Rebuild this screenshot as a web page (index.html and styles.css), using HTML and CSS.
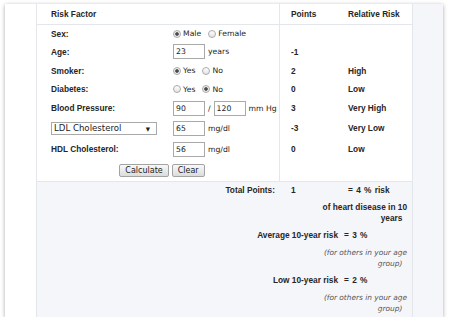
FILE: index.html
```html
<!DOCTYPE html>
<html lang="en">
<head>
  <meta charset="UTF-8">
  <title>Heart Risk Calculator</title>
  <link rel="stylesheet" href="styles.css">
</head>
<body>
  <div class="card">
    <div class="panel">
      <div class="sheet">
        <!-- form part -->
        <div class="form">
          <div class="row head">
            <div class="lbl span2 b">Risk Factor</div>
            <div class="pts b">Points</div>
            <div class="risk b">Relative Risk</div>
          </div>
          <div class="row r-sex">
            <div class="lbl b">Sex:</div>
            <div class="ctl">
              <label class="opt"><input type="radio" name="sex" checked>Male</label>
              <label class="opt"><input type="radio" name="sex">Female</label>
            </div>
            <div class="pts b"></div>
            <div class="risk b"></div>
          </div>
          <div class="row r-age">
            <div class="lbl b">Age:</div>
            <div class="ctl"><input class="num" type="text" value="23"><span class="unit">years</span></div>
            <div class="pts b">-1</div>
            <div class="risk b"></div>
          </div>
          <div class="row r-smoke">
            <div class="lbl b">Smoker:</div>
            <div class="ctl">
              <label class="opt"><input type="radio" name="smoker" checked>Yes</label>
              <label class="opt"><input type="radio" name="smoker">No</label>
            </div>
            <div class="pts b">2</div>
            <div class="risk b">High</div>
          </div>
          <div class="row r-diab">
            <div class="lbl b">Diabetes:</div>
            <div class="ctl">
              <label class="opt"><input type="radio" name="diabetes">Yes</label>
              <label class="opt"><input type="radio" name="diabetes" checked>No</label>
            </div>
            <div class="pts b">0</div>
            <div class="risk b">Low</div>
          </div>
          <div class="row r-bp">
            <div class="lbl b">Blood Pressure:</div>
            <div class="ctl">
              <input class="num" type="text" value="90"><span class="slash">/</span><input class="num" type="text" value="120"><span class="unit">mm Hg</span>
            </div>
            <div class="pts b">3</div>
            <div class="risk b">Very High</div>
          </div>
          <div class="row r-ldl">
            <div class="lbl">
              <span class="pick">LDL Cholesterol</span>
            </div>
            <div class="ctl"><input class="num" type="text" value="65"><span class="unit">mg/dl</span></div>
            <div class="pts b">-3</div>
            <div class="risk b">Very Low</div>
          </div>
          <div class="row r-hdl">
            <div class="lbl b">HDL Cholesterol:</div>
            <div class="ctl"><input class="num" type="text" value="56"><span class="unit">mg/dl</span></div>
            <div class="pts b">0</div>
            <div class="risk b">Low</div>
          </div>
          <div class="row r-btn">
            <div class="btns span2">
              <button type="button">Calculate</button>
              <button type="button">Clear</button>
            </div>
            <div class="pts"></div>
            <div class="risk"></div>
          </div>
        </div>

        <!-- results part -->
        <div class="results">
          <div class="row total">
            <div class="tot-lbl span2 b">Total Points:</div>
            <div class="tot-pts b">1</div>
            <div class="risk b val">= 4 % risk</div>
          </div>
          <div class="note b">of heart disease in 10 years&nbsp;&nbsp;</div>
          <div class="cmp b">
            <span class="cmp-lbl">Average 10-year risk</span>
            <span class="val">= 3 %</span>
          </div>
          <div class="note muted">(for others in your age group)&nbsp;&nbsp;</div>
          <div class="cmp b">
            <span class="cmp-lbl">Low 10-year risk</span>
            <span class="val">= 2 %</span>
          </div>
          <div class="note muted">(for others in your age group)&nbsp;&nbsp;</div>
        </div>
      </div>
    </div>
  </div>
</body>
</html>
```

FILE: styles.css
```css
/* page */
body {
  margin: 0;
  background-color: #ffffff;
  font-family: "DejaVu Sans", Verdana, sans-serif;
  font-size: 7.7px;
  color: #222222;
}

/* outer card with shadow */
.card {
  margin: 4px 0 0 5px;
  width: 438px;
  height: 313px;
  box-sizing: border-box;
  padding-left: 31px;
  background-color: #ffffff;
  box-shadow: 0 1px 4px rgba(0, 0, 0, 0.35);
  display: flex;
}

.panel {
  flex: 1;
  display: flex;
  background-color: #f5f6fa;
  border-left: 1px solid #e3e6eb;
}

.sheet {
  width: 376px;
  box-sizing: border-box;
  border-right: 1px solid #e3e6eb;
  display: flex;
  flex-direction: column;
}

/* bold text */
.b {
  font-family: "Liberation Sans", Arial, sans-serif;
  font-weight: bold;
  font-size: 8.3px;
  color: #262626;
}

/* form rows */
.form {
  background-color: #ffffff;
  border-bottom: 1px solid #e3e6eb;
}

.row {
  display: grid;
  grid-template-columns: 136px 106px 58px 1fr;
}

.row > div {
  display: flex;
  align-items: center;
}

.span2 {
  grid-column: 1 / 3;
}

.head {
  height: 20px;
  border-bottom: 1px solid #e3e6eb;
}

.r-sex { height: 17px; }
.r-age { height: 19px; }
.r-smoke { height: 19px; }
.r-diab { height: 18px; }
.r-bp { height: 20px; }
.r-ldl { height: 20px; }
.r-hdl { height: 22px; }
.r-btn { height: 21px; }

.lbl {
  padding-left: 14px;
}

.pts {
  border-left: 1px solid #e3e6eb;
  padding-left: 11px;
}

.risk {
  padding-left: 11px;
}

/* radios */
.opt {
  display: flex;
  align-items: center;
}

.opt + .opt {
  margin-left: 7px;
}

.opt input {
  appearance: none;
  -webkit-appearance: none;
  width: 8px;
  height: 8px;
  margin: 0 2px 0 0;
  box-sizing: border-box;
  border: 1px solid #ababab;
  border-radius: 50%;
  background: linear-gradient(#fdfdfd, #e4e4e4);
}

.opt input:checked {
  background: radial-gradient(circle, #4a4a4a 1.4px, #ececec 2.2px);
}

/* text boxes */
.num {
  width: 32px;
  height: 15px;
  box-sizing: border-box;
  margin: 0;
  padding: 0 2px;
  border: 1px solid #a9a9a9;
  border-radius: 0;
  font-family: "DejaVu Sans", Verdana, sans-serif;
  font-size: 7.7px;
  color: #222222;
  background-color: #ffffff;
}

.unit {
  margin-left: 3px;
}

.slash {
  margin: 0 3px;
}

/* dropdown */
.pick {
  position: relative;
  display: flex;
  align-items: center;
  width: 106px;
  height: 13px;
  box-sizing: border-box;
  padding-left: 2px;
  border: 1px solid #a9a9a9;
  background-color: #ffffff;
  font-size: 8.6px;
  color: #222222;
}

.pick::after {
  content: "\25BC";
  position: absolute;
  right: 6px;
  top: 3px;
  font-size: 5.5px;
  color: #222222;
}

/* buttons */
.btns {
  justify-content: center;
  padding-left: 8px;
  gap: 3px;
}

.btns button {
  height: 13px;
  padding: 0 5px;
  border: 1px solid #a3a3a3;
  border-radius: 2px;
  background: linear-gradient(#f8f8f8, #dcdcdc);
  font-family: "DejaVu Sans", Verdana, sans-serif;
  font-size: 8px;
  line-height: 11px;
  color: #222222;
}

/* results */
.results {
  flex: 1;
  padding-top: 3px;
  display: flex;
  flex-direction: column;
  gap: 6px;
  line-height: 11px;
}

.total .tot-lbl {
  justify-content: flex-end;
  padding-right: 4px;
}

.tot-pts {
  padding-left: 12px;
}

.val {
  word-spacing: 1px;
}

.note {
  align-self: flex-end;
  width: 94px;
  margin-right: 5px;
  text-align: right;
}

.muted {
  font-style: italic;
  font-size: 7.4px;
  color: #555555;
}

.cmp {
  display: grid;
  grid-template-columns: 301px auto;
}

.cmp-lbl {
  text-align: right;
}

.cmp .val {
  padding-left: 6px;
}
```
